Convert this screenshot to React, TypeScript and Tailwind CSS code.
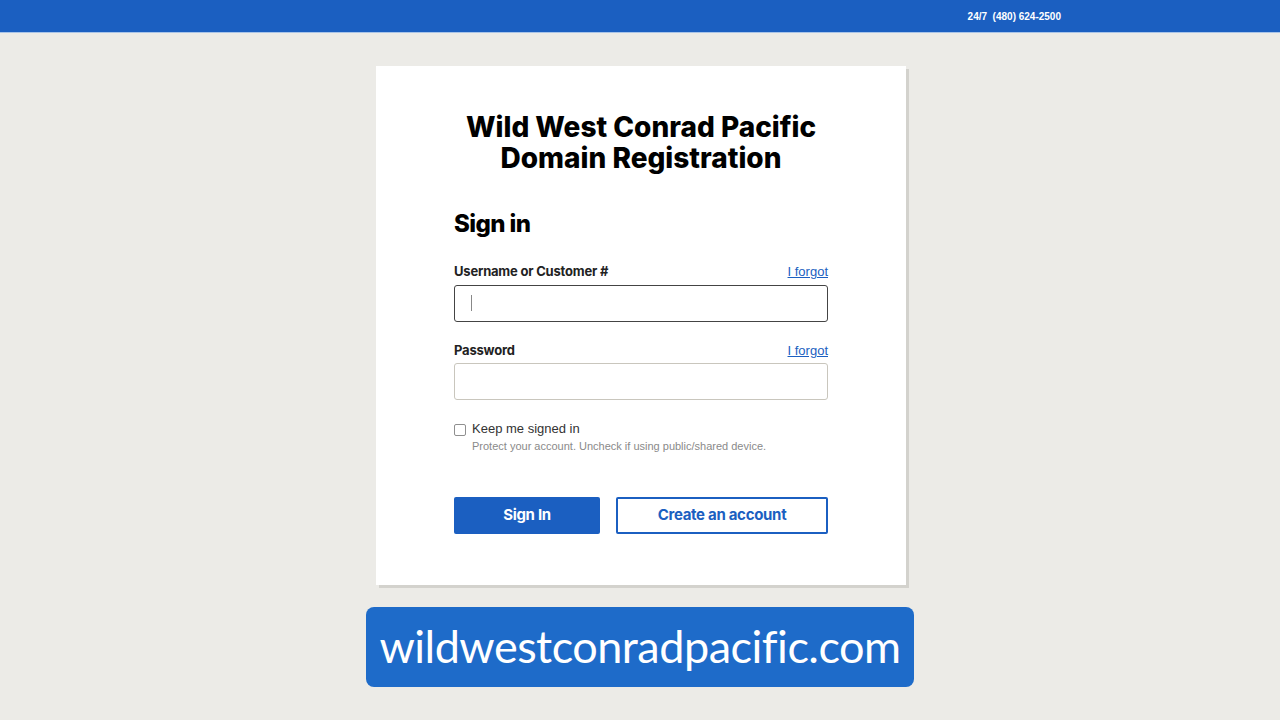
import React from 'react';

const heading = { fontFamily: 'Inter, "Open Sans", sans-serif' };
const body = { fontFamily: '"Liberation Sans", Arial, sans-serif' };

const Field: React.FC<{ label: string; active?: boolean }> = ({ label, active }) => (
  <div>
    <div className="flex items-end justify-between">
      <label className="text-[13px] font-bold text-[#222] tracking-[-0.2px]" style={heading}>
        {label}
      </label>
      <a href="#" className="text-[13px] text-[#1b5fc1] underline" style={body}>
        I forgot
      </a>
    </div>
    <div
      className={`mt-[3px] h-[37px] rounded-[3px] bg-white flex items-center px-4 ${
        active ? 'border border-[#444]' : 'border border-[#c9c6bd]'
      }`}
    >
      {active && <span className="w-px h-[16px] bg-[#888]" />}
    </div>
  </div>
);

export default function App() {
  return (
    <div className="min-h-screen w-full bg-[#ecebe7] flex flex-col">
      <header className="h-[33px] bg-[#1b5fc1] border-b border-[#a9c4e8] flex items-center justify-end pr-[219px]">
        <span className="text-[10px] font-bold text-white" style={body}>
          24/7&nbsp;&nbsp;(480) 624-2500
        </span>
      </header>

      <main className="flex flex-col items-center">
        <div className="ml-[2px] mt-[33px] w-[530px] bg-white shadow-[3px_3px_0_#d3d2cd] px-[78px] pt-[46px] pb-[51px]">
          <h1
            className="text-center text-[28px] leading-[31px] font-extrabold text-black tracking-[0px]"
            style={heading}
          >
            Wild West Conrad Pacific
            <br />
            Domain Registration
          </h1>

          <h2 className="mt-[32px] text-[24px] font-extrabold text-black tracking-[-0.6px]" style={heading}>
            Sign in
          </h2>

          <div className="mt-[20px] flex flex-col gap-[19px]">
            <Field label="Username or Customer #" active />
            <Field label="Password" />
          </div>

          <div className="mt-[20px] flex gap-[6px]" style={body}>
            <span className="mt-[4px] w-[12px] h-[12px] border border-[#8f8f8f] rounded-[2px] bg-white shrink-0" />
            <div>
              <div className="text-[13px] text-[#333] leading-[18px]">Keep me signed in</div>
              <div className="text-[11px] text-[#8a8a8a] leading-[16px]">
                Protect your account. Uncheck if using public/shared device.
              </div>
            </div>
          </div>

          <div className="mt-[43px] flex gap-[16px]" style={heading}>
            <button className="w-[146px] h-[37px] rounded-[2px] bg-[#1b5fc1] text-white text-[15px] font-bold tracking-[-0.3px]">
              Sign In
            </button>
            <button className="flex-1 h-[37px] rounded-[2px] border-2 border-[#1b5fc1] bg-white text-[#1b5fc1] text-[15px] font-bold tracking-[-0.3px]">
              Create an account
            </button>
          </div>
        </div>

        <div className="mt-[22px] w-[548px] h-[80px] rounded-[8px] bg-[#1e6bc9] flex items-center justify-center">
          <span className="text-white text-[45px] tracking-[-0.5px]" style={{ fontFamily: 'Lato, sans-serif' }}>
            wildwestconradpacific.com
          </span>
        </div>
      </main>
    </div>
  );
}
